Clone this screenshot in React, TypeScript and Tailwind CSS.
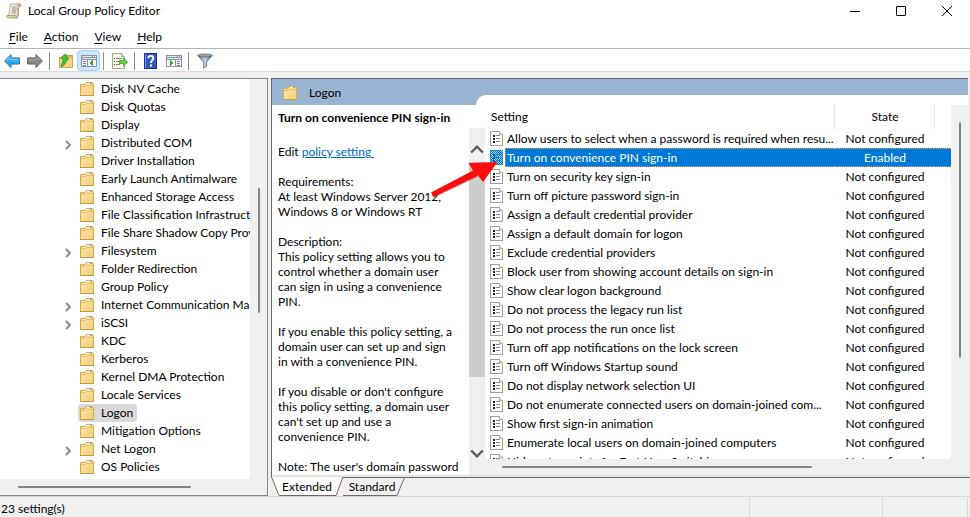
import type { ReactNode } from "react";

const treeItems = [
  { label: "Disk NV Cache" },
  { label: "Disk Quotas" },
  { label: "Display" },
  { label: "Distributed COM", expandable: true },
  { label: "Driver Installation" },
  { label: "Early Launch Antimalware" },
  { label: "Enhanced Storage Access" },
  { label: "File Classification Infrastructure" },
  { label: "File Share Shadow Copy Provider" },
  { label: "Filesystem", expandable: true },
  { label: "Folder Redirection" },
  { label: "Group Policy" },
  { label: "Internet Communication Management", expandable: true },
  { label: "iSCSI", expandable: true },
  { label: "KDC" },
  { label: "Kerberos" },
  { label: "Kernel DMA Protection" },
  { label: "Locale Services" },
  { label: "Logon", selected: true },
  { label: "Mitigation Options" },
  { label: "Net Logon", expandable: true },
  { label: "OS Policies" },
];

const settings = [
  { name: "Allow users to select when a password is required when resu...", state: "Not configured" },
  { name: "Turn on convenience PIN sign-in", state: "Enabled", selected: true },
  { name: "Turn on security key sign-in", state: "Not configured" },
  { name: "Turn off picture password sign-in", state: "Not configured" },
  { name: "Assign a default credential provider", state: "Not configured" },
  { name: "Assign a default domain for logon", state: "Not configured" },
  { name: "Exclude credential providers", state: "Not configured" },
  { name: "Block user from showing account details on sign-in", state: "Not configured" },
  { name: "Show clear logon background", state: "Not configured" },
  { name: "Do not process the legacy run list", state: "Not configured" },
  { name: "Do not process the run once list", state: "Not configured" },
  { name: "Turn off app notifications on the lock screen", state: "Not configured" },
  { name: "Turn off Windows Startup sound", state: "Not configured" },
  { name: "Do not display network selection UI", state: "Not configured" },
  { name: "Do not enumerate connected users on domain-joined com...", state: "Not configured" },
  { name: "Show first sign-in animation", state: "Not configured" },
  { name: "Enumerate local users on domain-joined computers", state: "Not configured" },
  { name: "Hide entry points for Fast User Switching", state: "Not configured" },
];

const description = [
  ["Requirements:", "At least Windows Server 2012,", "Windows 8 or Windows RT"],
  [
    "Description:",
    "This policy setting allows you to",
    "control whether a domain user",
    "can sign in using a convenience",
    "PIN.",
  ],
  ["If you enable this policy setting, a", "domain user can set up and sign", "in with a convenience PIN."],
  [
    "If you disable or don't configure",
    "this policy setting, a domain user",
    "can't set up and use a",
    "convenience PIN.",
  ],
  ["Note: The user's domain password"],
];

function FolderIcon() {
  return (
    <svg viewBox="0 0 14 14" className="h-[14px] w-[14px] shrink-0">
      <defs>
        <linearGradient id="folder" x1="0" y1="0" x2="1" y2="1">
          <stop offset="0" stopColor="#ffe9a8" />
          <stop offset="1" stopColor="#f0cd78" />
        </linearGradient>
      </defs>
      <path d="M.5 2.500h4.500L6.500 .5h6l1 1v12H.5z" fill="url(#folder)" stroke="#d3ab55" />
      <path d="M1 4.500h4.500l1-1H13" fill="none" stroke="#e2be69" />
      <rect x="7" y="1" width="5" height="1" fill="#fff" />
      <rect x="10" y="1" width="2" height="1" fill="#5aa0d8" />
      <path d="M0 13.500h14" stroke="#c39a45" />
    </svg>
  );
}

function ScrollIcon() {
  return (
    <svg viewBox="0 0 16 16" className="h-4 w-4 shrink-0">
      <path d="M4.500 1h9.500c1.500 0 1.500 2.500 0 2.500h-1.500L12 13H2.500z" fill="#f6efd8" stroke="#a8a08a" strokeWidth=".8" />
      <path d="M12.500 3.500c-1-.5-.8-2.500.6-2.500 1.600 0 1.500 2.500 0 2.500z" fill="#d8c48c" stroke="#9c8c5c" strokeWidth=".7" />
      <path d="M1 12.500h9c-.6 1 0 2.500 1 2.500H2.200c-1.400 0-1.800-1.500-1.200-2.500z" fill="#e2cf9a" stroke="#9c8c5c" strokeWidth=".7" />
      <path d="M12 5v8c0 1-.5 2-1.500 2" fill="none" stroke="#a09270" />
      <path d="M6 4h5M6 6h5M5.500 8h5M5.500 10h4.500" stroke="#8e8f94" />
    </svg>
  );
}

function ArrowIcon({ forward = false }) {
  return (
    <svg viewBox="0 0 16 16" className={forward ? "h-4 w-4 -scale-x-100" : "h-4 w-4"}>
      <path
        d="M.6 8L7 1.500V5h8.400v6H7v3.500z"
        fill={forward ? "#8b8b8b" : "#35a8ea"}
        stroke={forward ? "#5d5d5d" : "#1773b8"}
      />
      <path d="M2.500 7.500L6 4v2.500h8.500" fill="none" stroke={forward ? "#a9a9a9" : "#8fd8fb"} />
    </svg>
  );
}

function UpFolderIcon() {
  return (
    <svg viewBox="0 0 16 16" className="h-4 w-4">
      <path d="M8.500 4V2.500h6V5z" fill="#e6c26b" stroke="#c9a04a" />
      <path d="M1.500 4.500h13v10h-13z" fill="#f6d581" stroke="#cfa44c" />
      <path d="M4 13.500c3-2 4.500-4 4.500-7l2 .3L7.500 1 2.500 5l2.200.5c.3 3-.5 5.500-2 7.500z" fill="#42c234" stroke="#23891c" strokeWidth=".7" />
    </svg>
  );
}

function ConsoleIcon({ flipped = false }) {
  return (
    <svg viewBox="0 0 16 14" className="h-[14px] w-4" shapeRendering="crispEdges">
      <rect x="0" y="1" width="16" height="12" fill="#8b93a1" />
      <rect x="1" y="2" width="10" height="1" fill="#dfe3ea" />
      <rect x="12" y="2" width="1" height="1" fill="#fff" />
      <rect x="14" y="2" width="1" height="1" fill="#fff" />
      <rect x="1" y="4" width="14" height="1" fill="#e5e8ee" />
      {flipped ? (
        <>
          <rect x="1" y="6" width="8" height="6" fill="#fff" />
          <rect x="10" y="6" width="5" height="6" fill="#fff" />
          <path d="M11 7.500h3M11 9.500h3M11 11.500h3" stroke="#6687ad" />
          <path d="M4 6v6l4-3z" fill="#35ad28" />
        </>
      ) : (
        <>
          <rect x="1" y="6" width="5" height="6" fill="#fff" />
          <rect x="7" y="6" width="8" height="6" fill="#fff" />
          <path d="M2 7.500h3M2 9.500h3M2 11.500h3" stroke="#6687ad" />
          <path d="M12 6v6L8 9z" fill="#35ad28" />
        </>
      )}
    </svg>
  );
}

function ExportIcon() {
  return (
    <svg viewBox="0 0 16 16" className="h-4 w-4">
      <path d="M.5 .5h9l3 3v12H.5z" fill="#fcf8e6" stroke="#a8a393" />
      <path d="M9.500 .5v3h3" fill="#e5ddc3" stroke="#a8a393" />
      <path d="M2 5.500h1M2 8.500h1M2 11.500h1" stroke="#444" />
      <path d="M4 5.500h6M4 8.500h4M4 11.500h4" stroke="#8588a8" />
      <path d="M7.500 7.500h4V5l4.200 4-4.200 4v-2.500h-4z" fill="#5fd348" stroke="#2f9d22" strokeWidth=".7" />
    </svg>
  );
}

function HelpIcon() {
  return (
    <svg viewBox="0 0 13 16" className="h-4 w-[13px]">
      <rect x=".5" y=".5" width="12" height="15" fill="#3558bd" stroke="#1b3388" />
      <path d="M1.500 1v14" stroke="#7f9ce6" />
      <path d="M4.300 5.200C4.300 2 9.300 2 9.300 5.200 9.300 7.300 6.900 7.300 6.900 10" fill="none" stroke="#fff" strokeWidth="1.800" />
      <rect x="6" y="11.500" width="2" height="2" fill="#fff" />
    </svg>
  );
}

function FilterIcon() {
  return (
    <svg viewBox="0 0 16 16" className="h-4 w-4">
      <defs>
        <linearGradient id="funnel">
          <stop offset="0" stopColor="#5f7486" />
          <stop offset=".5" stopColor="#bed2df" />
          <stop offset="1" stopColor="#4d6273" />
        </linearGradient>
      </defs>
      <path d="M.8 2.500L6.500 9v6l3-1.500V9l5.700-6.500z" fill="url(#funnel)" stroke="#5b6e7d" strokeWidth=".8" />
      <ellipse cx="8" cy="2.500" rx="7.200" ry="1.500" fill="#8fa5b5" stroke="#55697a" strokeWidth=".8" />
    </svg>
  );
}

function PolicyIcon({ selected = false }) {
  return (
    <svg viewBox="0 0 13 15" className="h-[15px] w-[13px] shrink-0" shapeRendering="crispEdges">
      <path d="M.5 .5h9l3 3v11H.5z" fill="#fff" stroke="#a0a0a0" />
      <path d="M9.500 .5v3h3" fill="#ddd" stroke="#b4b4b4" />
      <path d="M3 4.500h2M3 7.500h2M3 10.500h2" stroke="#222" strokeWidth="2" />
      <path d="M6 4.500h4M6 7.500h4M6 10.500h4" stroke="#8486a5" />
      {selected && (
        <>
          <rect width="13" height="15" fill="#0078d7" opacity=".35" />
          <path
            d="M0 .5h13M0 2.500h13M0 4.500h13M0 6.500h13M0 8.500h13M0 10.500h13M0 12.500h13M0 14.500h13"
            stroke="#0078d7"
            strokeDasharray="1 1"
          />
          <path
            d="M1 1.500h12M1 3.500h12M1 5.500h12M1 7.500h12M1 9.500h12M1 11.500h12M1 13.500h12"
            stroke="#0078d7"
            strokeDasharray="1 1"
          />
        </>
      )}
    </svg>
  );
}

function Chevron({ className, path }: { className: string; path: string }) {
  return (
    <svg viewBox="0 0 12 12" className={className}>
      <path d={path} fill="none" stroke="currentColor" strokeWidth="2" />
    </svg>
  );
}

function ToolButton({ label, active = false, children }: { label: string; active?: boolean; children: ReactNode }) {
  return (
    <button
      type="button"
      aria-label={label}
      className={
        active
          ? "flex h-[21px] w-[23px] items-center justify-center rounded-sm border border-[#99d1ff] bg-[#cce8ff]"
          : "flex h-[21px] w-[23px] items-center justify-center"
      }
    >
      {children}
    </button>
  );
}

function Divider() {
  return <div className="mr-1 ml-[3px] h-[18px] w-px bg-[#8c8c8c]" />;
}

function TitleBar() {
  return (
    <header className="flex h-[22px] shrink-0 items-center pl-[6px] pr-[11px]">
      <ScrollIcon />
      <h1 className="ml-[6px] flex-1">Local Group Policy Editor</h1>
      <div className="flex items-center gap-[22px]">
        <button type="button" aria-label="Minimize" className="flex h-5 w-6 items-center justify-center">
          <svg viewBox="0 0 10 10" className="h-[10px] w-[10px]" shapeRendering="crispEdges">
            <path d="M0 5.500h10" stroke="#000" />
          </svg>
        </button>
        <button type="button" aria-label="Maximize" className="flex h-5 w-6 items-center justify-center">
          <svg viewBox="0 0 10 10" className="h-[10px] w-[10px]">
            <rect x=".5" y=".5" width="9" height="9" rx=".5" fill="none" stroke="#000" />
          </svg>
        </button>
        <button type="button" aria-label="Close" className="flex h-5 w-6 items-center justify-center">
          <svg viewBox="0 0 10 10" className="h-[10px] w-[10px]">
            <path d="M0 0l10 10M10 0L0 10" stroke="#000" />
          </svg>
        </button>
      </div>
    </header>
  );
}

function MenuBar() {
  const menus = ["File", "Action", "View", "Help"];

  return (
    <nav className="flex h-[26px] shrink-0 items-center gap-4 pt-1 pl-[9px]">
      {menus.map((menu) => (
        <button key={menu} type="button">
          <span className="underline underline-offset-2">{menu[0]}</span>
          {menu.slice(1)}
        </button>
      ))}
    </nav>
  );
}

function Toolbar() {
  return (
    <div className="flex h-6 shrink-0 items-end border-y border-t-[#b4b4b4] border-b-[#dcdcdc]">
      <div className="flex items-center">
        <ToolButton label="Back"><ArrowIcon /></ToolButton>
        <ToolButton label="Forward"><ArrowIcon forward /></ToolButton>
        <Divider />
        <ToolButton label="Up one level"><UpFolderIcon /></ToolButton>
        <ToolButton label="Show or hide console tree" active><ConsoleIcon /></ToolButton>
        <Divider />
        <ToolButton label="Export list"><ExportIcon /></ToolButton>
        <Divider />
        <ToolButton label="Help"><HelpIcon /></ToolButton>
        <ToolButton label="Show or hide action pane"><ConsoleIcon flipped /></ToolButton>
        <Divider />
        <ToolButton label="Filter"><FilterIcon /></ToolButton>
      </div>
    </div>
  );
}

function ConsoleTree() {
  return (
    <aside className="flex w-[268px] shrink-0 flex-col border-y border-r border-[#828790] bg-[#f0f0f0]">
      <div className="flex min-h-0 flex-1">
        <ul className="min-w-0 flex-1 overflow-hidden rounded-br bg-white pt-px">
          {treeItems.map((item) => (
            <li key={item.label} className="flex h-[18px] items-center pl-[62px]">
              <span className="flex w-4 shrink-0 pt-1 text-[#8c8c8c]">
                {item.expandable && <Chevron className="h-3 w-3" path="M4 2l4 4-4 4" />}
              </span>
              <span
                className={
                  item.selected
                    ? "flex h-[18px] items-center gap-[7px] rounded-sm bg-[#d9d9d9] px-[2px] pr-1 whitespace-nowrap"
                    : "flex h-[18px] items-center gap-[7px] px-[2px] whitespace-nowrap"
                }
              >
                <FolderIcon />
                {item.label}
              </span>
            </li>
          ))}
        </ul>
        <div className="flex w-[17px] justify-center pt-[109px]">
          <div className="h-[125px] w-[2px] rounded bg-[#858585]" />
        </div>
      </div>
      <div className="flex h-4 items-center pl-[18px]">
        <div className="h-[2px] w-[173px] rounded bg-[#858585]" />
      </div>
    </aside>
  );
}

function DescriptionPane() {
  return (
    <section className="flex w-[213px] shrink-0 flex-col">
      <h2 className="flex h-[23px] shrink-0 items-center pt-[2px] pl-[6px] font-bold whitespace-nowrap">
        Turn on convenience PIN sign-in
      </h2>
      <div className="flex min-h-0 flex-1">
        <div className="min-w-0 flex-1 overflow-hidden pt-4 pl-[6px] leading-[15px] whitespace-nowrap">
          <p>
            Edit <a href="#policy" className="text-[#0066cc] underline">policy setting&nbsp;</a>
          </p>
          {description.map((lines) => (
            <p key={lines[0]} className="mt-[15px]">
              {lines.map((line) => (
                <span key={line} className="block">{line}</span>
              ))}
            </p>
          ))}
        </div>
        <div className="flex w-4 flex-col items-center bg-[#f0f0f0] text-[#5a5a5a]">
          <div className="flex h-[34px] items-center pt-2">
            <Chevron className="h-[14px] w-[14px]" path="M1 9l5-5 5 5" />
          </div>
          <div className="h-[215px] w-full bg-[#cdcdcd]" />
          <div className="flex-1" />
          <div className="flex h-8 items-start pt-1">
            <Chevron className="h-[14px] w-[14px]" path="M1 3l5 5 5-5" />
          </div>
        </div>
      </div>
    </section>
  );
}

function SettingsList() {
  return (
    <section className="flex min-w-0 flex-1 flex-col bg-[#f0f0f0]">
      <div className="flex min-h-0 flex-1">
        <div className="min-w-0 flex-1 overflow-hidden rounded-b bg-white">
          <table className="w-full table-fixed border-collapse">
            <colgroup>
              <col />
              <col className="w-[100px]" />
              <col className="w-[17px]" />
            </colgroup>
            <thead>
              <tr className="h-6">
                <th className="border-r border-[#e5e5e5] p-0 pl-[6px] text-left font-normal">Setting</th>
                <th className="border-r border-[#e5e5e5] p-0 pl-[2px] text-center font-normal">State</th>
                <th className="p-0" aria-label="Filler" />
              </tr>
            </thead>
            <tbody>
              {settings.map((setting) => (
                <tr key={setting.name} className="h-[19px] whitespace-nowrap">
                  <td className="p-0 pl-[5px]">
                    <div className="flex items-center gap-[2px]">
                      <PolicyIcon selected={setting.selected} />
                      <div
                        className={
                          setting.selected
                            ? "h-[19px] flex-1 border-y border-l border-dotted border-[#e8a35c] bg-[#0078d7] pl-px leading-[17px] text-white"
                            : "h-[19px] flex-1 pl-[2px] leading-[19px]"
                        }
                      >
                        {setting.name}
                      </div>
                    </div>
                  </td>
                  <td className="p-0 text-center">
                    <div
                      className={
                        setting.selected
                          ? "h-[19px] border-y border-dotted border-[#e8a35c] bg-[#0078d7] pl-[2px] leading-[17px] text-white"
                          : "h-[19px] pl-[2px] leading-[19px]"
                      }
                    >
                      {setting.state}
                    </div>
                  </td>
                  <td className="p-0">
                    {setting.selected && (
                      <div className="h-[19px] border-y border-dotted border-[#e8a35c] bg-[#0078d7]" />
                    )}
                  </td>
                </tr>
              ))}
            </tbody>
          </table>
        </div>
        <div className="flex w-[17px] justify-center pt-[17px]">
          <div className="h-[236px] w-[2px] rounded bg-[#858585]" />
        </div>
      </div>
      <div className="flex h-4 items-center pl-[17px]">
        <div className="h-[2px] w-[310px] rounded bg-[#858585]" />
      </div>
    </section>
  );
}

function ViewTabs() {
  return (
    <div className="flex h-[19px] shrink-0">
      <button type="button" className="relative h-[19px] w-[72px]">
        <svg viewBox="0 0 72 19" className="absolute inset-0 h-full w-full">
          <path d="M0 0h72l-7 18.500H8z" fill="#fff" />
          <path d="M.5 0L8 18.500h57L72 0" fill="none" stroke="#696969" />
        </svg>
        <span className="relative">Extended</span>
      </button>
      <button type="button" className="relative h-[19px] w-[62px] pr-1">
        <svg viewBox="0 0 62 19" className="absolute inset-0 h-full w-full">
          <path d="M0 .5h62M0 .5l-3 8 3 10h54L61.500 .5" fill="none" stroke="#696969" />
        </svg>
        <span className="relative">Standard</span>
      </button>
      <div className="flex-1 border-t border-[#696969]" />
    </div>
  );
}

function DetailsPane() {
  return (
    <main className="relative ml-[3px] flex min-w-0 flex-1 flex-col">
      <div className="mr-[2px] flex min-h-0 flex-1 flex-col border-t border-l border-[#696969] bg-white">
        <div className="flex shrink-0 bg-[#99b4d1]">
          <div className="flex h-[26px] w-[204px] items-center gap-3 pt-px pl-[11px]">
            <FolderIcon />
            Logon
          </div>
          <div className="mt-4 h-[10px] flex-1 rounded-tl-[10px] bg-white" />
        </div>
        <div className="flex min-h-0 flex-1">
          <DescriptionPane />
          <SettingsList />
        </div>
        <div className="h-[2px] bg-[#e3e3e3]" />
      </div>
      <ViewTabs />
      <svg viewBox="0 0 70 40" className="absolute top-[80px] left-[159px] h-10 w-[70px]">
        <path d="M3 38L47 17" stroke="#8c1010" strokeWidth="4" opacity=".4" />
        <path d="M1 34.500L43 12.500 38.500 5l29-1L53 24l-5-6.500L3.500 39z" fill="#fb0d0d" />
      </svg>
    </main>
  );
}

function StatusBar() {
  return (
    <footer className="flex h-[21px] shrink-0 items-center border-t border-[#d7d7d7] pt-px pl-px">
      <span className="flex-1 pt-[2px]">23 setting(s)</span>
      <div className="h-full w-[133px] border-l border-[#d7d7d7]" />
      <div className="h-full w-[86px] border-x border-[#d7d7d7]" />
      <div className="w-[2px]" />
    </footer>
  );
}

export default function App() {
  return (
    <div className="flex h-screen flex-col overflow-hidden bg-[#f0f0f0] font-['Lato',sans-serif] text-[12px] leading-4 text-black">
      <div className="shrink-0 bg-white">
        <TitleBar />
        <MenuBar />
        <Toolbar />
      </div>
      <div className="flex min-h-0 flex-1 pt-[6px]">
        <ConsoleTree />
        <DetailsPane />
      </div>
      <StatusBar />
    </div>
  );
}
